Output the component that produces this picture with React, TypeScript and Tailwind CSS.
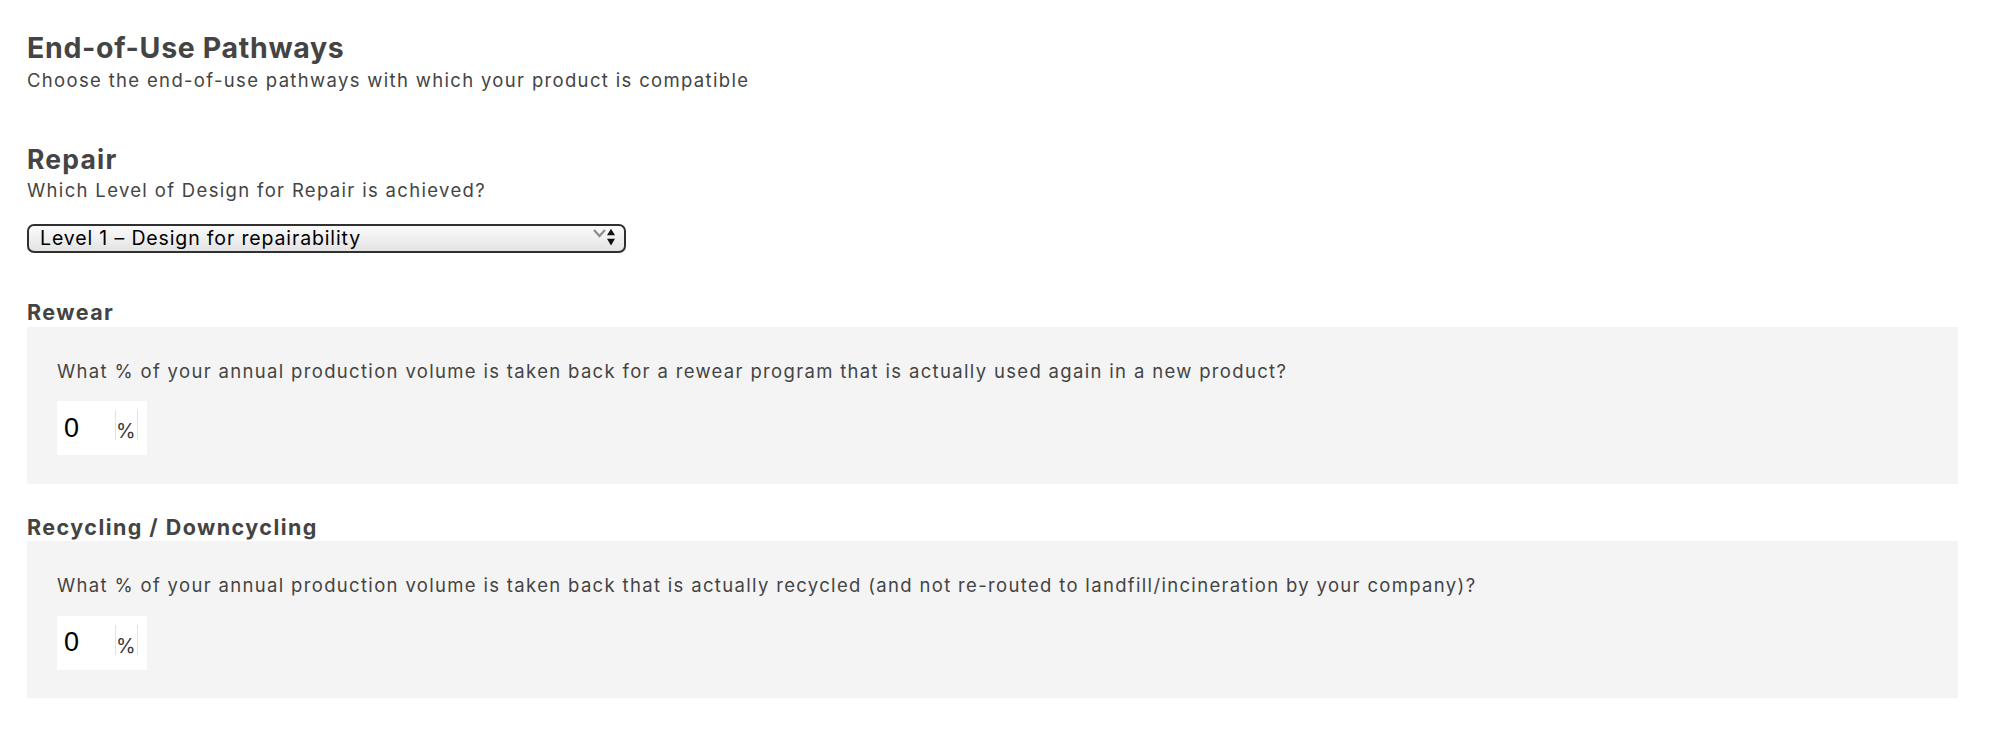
import React from "react";

const gray = "text-[#444444]";
const body = "text-[18.5px] leading-none tracking-[1.33px] text-[#444444]";

function PercentInput() {
  return (
    <div className="flex h-[54px] w-[90px] items-center bg-white">
      <span className="w-[58px] pl-[7px] text-[27px] leading-none text-black [font-family:'Liberation_Sans',Arial,sans-serif]">
        0
      </span>
      <span className="mb-[6px] flex h-[30px] w-[23px] items-end border-x border-[#e2e2e2] text-[20px] leading-none text-[#3a3a3a]">
        <span className="mb-[-1px]">%</span>
      </span>
    </div>
  );
}

function Section({ title, question, gapTop }: { title: string; question: string; gapTop: string }) {
  return (
    <div className={`flex flex-col ${gapTop}`}>
      <h3 className={`text-[21.5px] font-bold leading-none tracking-[1.45px] ${gray}`}>{title}</h3>
      <div className="mt-[3px] flex h-[157px] flex-col bg-[#f4f4f4] pl-[30px] pt-[35px]">
        <p className={body}>{question}</p>
        <div className="mt-[21px]">
          <PercentInput />
        </div>
      </div>
    </div>
  );
}

export default function App() {
  return (
    <div className="min-h-[730px] bg-white pl-[27px] pr-[36px] pt-[34px] [font-family:Inter,'Noto_Sans',sans-serif]">
      <h1 className={`text-[28.5px] font-bold leading-none tracking-[0.67px] ${gray}`}>End-of-Use Pathways</h1>
      <p className={`mt-[8px] ${body}`}>Choose the end-of-use pathways with which your product is compatible</p>

      <h2 className={`mt-[57px] text-[26.5px] font-bold leading-none tracking-[1.2px] ${gray}`}>Repair</h2>
      <p className={`mt-[8px] ${body}`}>Which Level of Design for Repair is achieved?</p>

      <div className="mt-[25px] flex h-[29px] w-[599px] items-center justify-between rounded-[7px] border-2 border-[#303030] bg-linear-to-b from-[#fbfbfb] to-[#e3e3e3] pl-[11px] pr-[8px]">
        <span className="text-[19.5px] leading-none tracking-[0.86px] text-black">Level 1 – Design for repairability</span>
        <svg width="24" height="20" viewBox="0 0 24 20" className="mb-[2px]">
          <polyline points="2,2 7.5,8 13,2" fill="none" stroke="#8e8e8e" strokeWidth="2.2" />
          <polygon points="19,0.7 23,7.3 15,7.3" fill="#111" />
          <polygon points="15,10.7 23,10.7 19,17.5" fill="#111" />
        </svg>
      </div>

      <Section
        title="Rewear"
        gapTop="mt-[49px]"
        question="What % of your annual production volume is taken back for a rewear program that is actually used again in a new product?"
      />
      <Section
        title="Recycling / Downcycling"
        gapTop="mt-[33px]"
        question="What % of your annual production volume is taken back that is actually recycled (and not re-routed to landfill/incineration by your company)?"
      />
    </div>
  );
}
